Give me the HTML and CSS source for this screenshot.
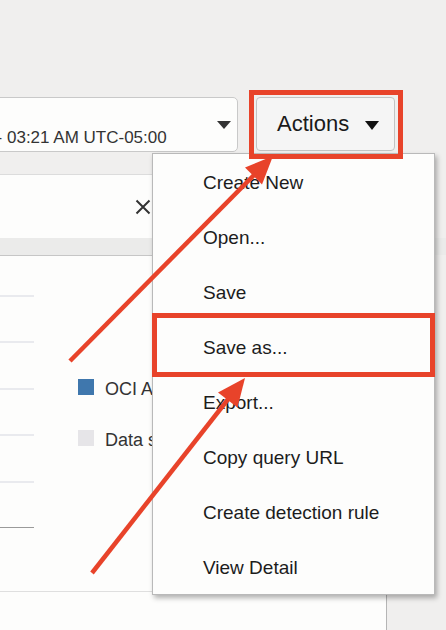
FILE: index.html
```html
<!DOCTYPE html>
<html>
<head>
<meta charset="utf-8">
<link rel="stylesheet" href="styles.css">
</head>
<body>
<div class="page">
  <div class="toolbar">
    <div class="select">
      <span class="select-text">- 03:21 AM UTC-05:00</span>
      <span class="caret"></span>
    </div>
    <button class="actions">Actions<span class="caret-dark"></span></button>
  </div>

  <div class="panel panel-head">
    <svg class="close" width="16" height="16" viewBox="0 0 16 16"><path d="M1.5 1.5 L14.5 14.5 M14.5 1.5 L1.5 14.5" stroke="#333" stroke-width="2" fill="none"/></svg>
  </div>
  <div class="band"></div>
  <div class="panel panel-body">
    <div class="chart-area">
      <div class="grid-col">
        <div class="grid-row"></div>
        <div class="grid-row"></div>
        <div class="grid-row"></div>
        <div class="grid-row"></div>
        <div class="grid-row"></div>
        <div class="grid-axis"></div>
      </div>
      <div class="legend">
        <div class="legend-item"><span class="swatch swatch-blue"></span><span class="legend-text">OCI Audit Logs</span></div>
        <div class="legend-item"><span class="swatch swatch-grey"></span><span class="legend-text">Data source</span></div>
      </div>
    </div>
  </div>

  <ul class="menu">
    <li>Create New</li>
    <li>Open...</li>
    <li>Save</li>
    <li>Save as...</li>
    <li>Export...</li>
    <li>Copy query URL</li>
    <li>Create detection rule</li>
    <li>View Detail</li>
  </ul>

  <div class="hl hl-actions"></div>
  <div class="hl hl-saveas"></div>

  <svg class="arrows" width="446" height="630" viewBox="0 0 446 630">
    <line x1="70" y1="361" x2="255" y2="174" stroke="#e8432a" stroke-width="4.5"/>
    <polygon points="273,156 262,184.5 245,167.5" fill="#e8432a"/>
    <line x1="92" y1="573" x2="229" y2="398" stroke="#e8432a" stroke-width="4.5"/>
    <polygon points="245,378 237.5,407.5 218,392.5" fill="#e8432a"/>
  </svg>
</div>
</body>
</html>
```
FILE: styles.css
```css
* { box-sizing: border-box; }
html, body { margin: 0; padding: 0; }
body {
  background: #f0efee;
  font-family: "Liberation Sans", Arial, sans-serif;
  color: #222;
}
.page {
  position: relative;
  width: 446px;
  height: 630px;
  overflow: hidden;
  background: #f0efee;
}
.toolbar {
  display: flex;
  align-items: flex-start;
  padding-top: 97px;
}
.select {
  display: flex;
  margin-left: -22px;
  width: 260px;
  height: 55px;
  border: 1px solid #c9c9c9;
  border-radius: 5px;
  background: #fdfdfc;
  overflow: hidden;
}
.select-text {
  align-self: flex-end;
  padding-left: 17.6px;
  padding-bottom: 3px;
  font-size: 17px;
  line-height: 20px;
  color: #333;
  white-space: nowrap;
}
.caret {
  align-self: center;
  margin-left: auto;
  margin-right: 6px;
  width: 0;
  height: 0;
  border-left: 7px solid transparent;
  border-right: 7px solid transparent;
  border-top: 8px solid #333;
}
.actions {
  display: flex;
  align-items: center;
  margin-left: 18px;
  width: 139px;
  height: 54px;
  padding: 0 0 0 20px;
  border: 1px solid #c3c3c3;
  border-radius: 4px;
  background: #f5f5f5;
  font-family: "Liberation Sans", Arial, sans-serif;
  font-size: 22px;
  color: #1a1a1a;
}
.caret-dark {
  margin-left: 16px;
  margin-top: 2px;
  width: 0;
  height: 0;
  border-left: 7px solid transparent;
  border-right: 7px solid transparent;
  border-top: 9px solid #111;
}
.panel {
  width: 387px;
  background: #fdfdfc;
}
.panel-head {
  margin-top: 22px;
  height: 64px;
  border-top: 1px solid #dcdcdc;
  display: flex;
  align-items: center;
  padding-left: 135px;
}
.band {
  height: 17px;
  background: #ebebea;
}
.panel-body {
  height: 375px;
  border-top: 1px solid #c6c6c6;
  border-right: 1px solid #b5b5b5;
}
.chart-area {
  display: flex;
  height: 336px;
  border-bottom: 1px solid #dfdfdf;
}
.grid-col {
  width: 34px;
  padding-top: 39px;
}
.grid-row {
  height: 46.4px;
  border-top: 2px solid #e9eaee;
}
.grid-axis {
  border-top: 1px solid #9a9a9a;
}
.legend {
  margin-left: 44px;
  padding-top: 123px;
  display: flex;
  flex-direction: column;
  gap: 35px;
}
.legend-item {
  display: flex;
  align-items: center;
  height: 16px;
  white-space: nowrap;
}
.swatch {
  width: 16px;
  height: 16px;
  margin-right: 11px;
  flex: none;
}
.swatch-blue { background: #3f77ad; }
.swatch-grey { background: #e6e5e8; }
.legend-text {
  font-size: 18px;
  line-height: 16px;
  padding-top: 3px;
  color: #333;
}
.menu {
  position: absolute;
  left: 152px;
  top: 153px;
  width: 283px;
  height: 442px;
  margin: 0;
  padding: 1px 0 0 0;
  list-style: none;
  background: #fdfdfc;
  border: 1px solid #b9b9b9;
  box-shadow: 2px 3px 5px rgba(0, 0, 0, 0.3);
}
.menu li {
  height: 55px;
  line-height: 55px;
  padding-left: 50px;
  font-size: 19px;
  color: #1c1c1c;
  white-space: nowrap;
}
.hl {
  position: absolute;
  border: 5px solid #e8432a;
}
.hl-actions {
  left: 249px;
  top: 90px;
  width: 154px;
  height: 69px;
}
.hl-saveas {
  left: 152px;
  top: 313px;
  width: 283px;
  height: 64px;
}
.arrows {
  position: absolute;
  left: 0;
  top: 0;
  pointer-events: none;
}
```
